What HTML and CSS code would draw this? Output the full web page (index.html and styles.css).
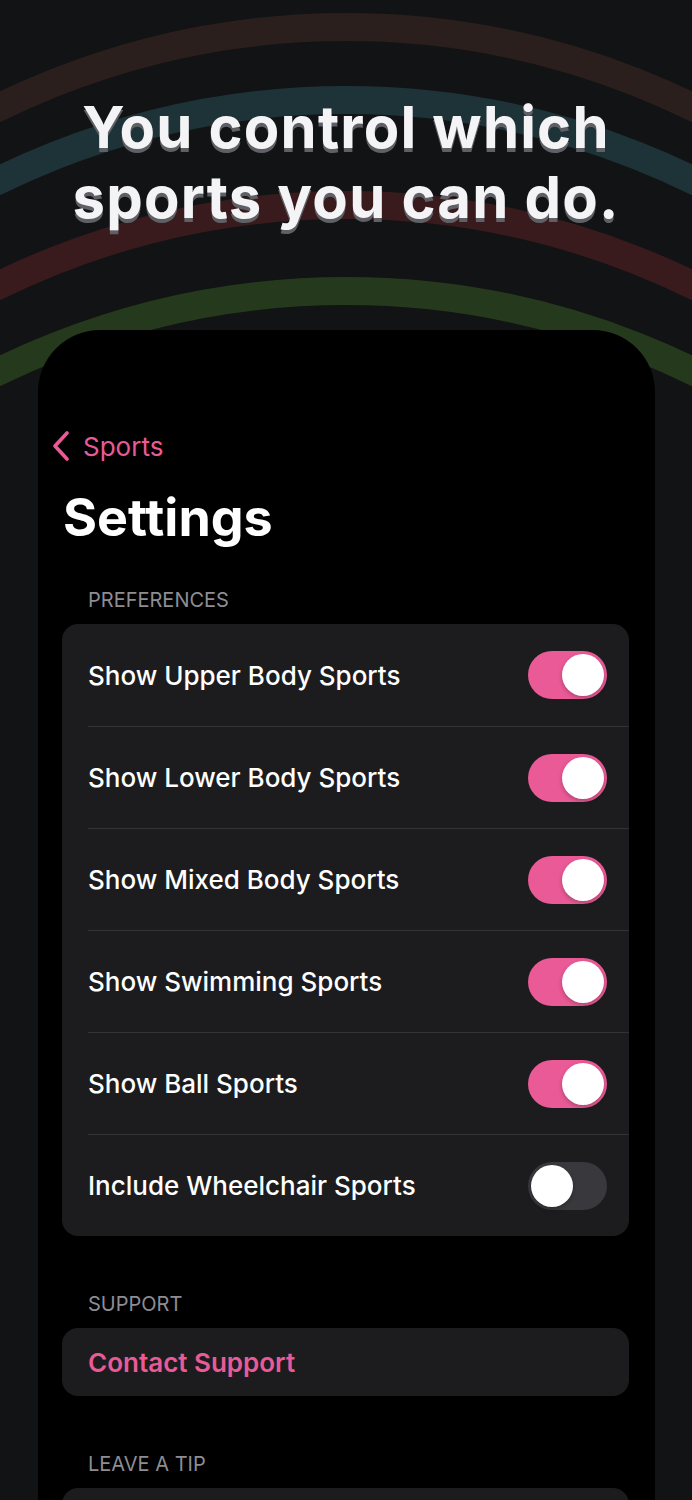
FILE: index.html
```html
<!DOCTYPE html>
<html lang="en">
  <head>
    <meta charset="UTF-8" />
    <meta name="viewport" content="width=device-width, initial-scale=1.0" />
    <title>Settings</title>
    <link rel="stylesheet" href="styles.css">
  </head>
  <body>
    <svg class="backdrop" width="692" height="420" viewBox="0 0 692 420">
      <g fill="none" stroke-width="28">
        <circle cx="346" cy="817" r="790" stroke="#2a1f1c" />
        <circle cx="346" cy="890" r="790" stroke="#1d3338" />
        <circle cx="346" cy="995" r="790" stroke="#3a1b1d" />
        <circle cx="346" cy="1081" r="790" stroke="#253a1d" />
      </g>
    </svg>

    <header class="hero">
      <h1>You control which<br />sports you can do.</h1>
    </header>

    <main class="phone">
      <nav class="back">
        <svg width="18" height="30" viewBox="0 0 18 30">
          <path d="M15 2 L3 15 L15 28" fill="none" stroke="#ea5a96" stroke-width="3.6" stroke-linecap="round" stroke-linejoin="round" />
        </svg>
        <span>Sports</span>
      </nav>

      <h2 class="title">Settings</h2>

      <section class="group">
        <h3 class="group-label">PREFERENCES</h3>
        <ul class="card">
          <li class="row"><span>Show Upper Body Sports</span><span class="toggle on"></span></li>
          <li class="row"><span>Show Lower Body Sports</span><span class="toggle on"></span></li>
          <li class="row"><span>Show Mixed Body Sports</span><span class="toggle on"></span></li>
          <li class="row"><span>Show Swimming Sports</span><span class="toggle on"></span></li>
          <li class="row"><span>Show Ball Sports</span><span class="toggle on"></span></li>
          <li class="row"><span>Include Wheelchair Sports</span><span class="toggle"></span></li>
        </ul>
      </section>

      <section class="group">
        <h3 class="group-label">SUPPORT</h3>
        <ul class="card">
          <li class="row link">Contact Support</li>
        </ul>
      </section>

      <section class="group">
        <h3 class="group-label">LEAVE A TIP</h3>
        <ul class="card">
          <li class="row"></li>
        </ul>
      </section>
    </main>
  </body>
</html>
```

FILE: styles.css
```css
html,
body {
  margin: 0;
  height: 1500px;
  overflow: hidden;
}
body {
  position: relative;
  background-color: #121315;
  font-family: Inter, "Noto Sans", sans-serif;
  color: white;
}
.backdrop {
  position: absolute;
  top: 0;
  left: 0;
}

.hero {
  position: relative;
  padding-top: 92px;
  height: 330px;
  box-sizing: border-box;
  text-align: center;
}
.hero h1 {
  margin: 0;
  font-size: 58px;
  line-height: 70px;
  font-weight: 700;
  letter-spacing: 1.2px;
  color: #f4f4f6;
  text-shadow: 0 4px 0 #5f5f66;
}

.phone {
  position: relative;
  margin: 0 37px 0 38px;
  padding: 100px 26px 0 24px;
  height: 1170px;
  box-sizing: border-box;
  overflow: hidden;
  background-color: black;
  border-radius: 62px 62px 0 0;
}

.back {
  display: flex;
  align-items: center;
  gap: 13px;
  margin-left: -10px;
  height: 32px;
  color: #ea5a96;
  font-size: 26px;
}

.title {
  margin: 25px 0 0 1px;
  font-size: 52px;
  line-height: 62px;
  font-weight: 700;
}

.group {
  margin-top: 39px;
}
.group + .group {
  margin-top: 56px;
}
.group-label {
  margin: 0 0 12px 26px;
  font-size: 20px;
  line-height: 24px;
  font-weight: 400;
  color: #8d8d93;
}
.card {
  list-style: none;
  margin: 0;
  padding: 0 0 0 26px;
  background-color: #1c1c1e;
  border-radius: 16px;
}
.row {
  display: flex;
  justify-content: space-between;
  align-items: center;
  height: 102px;
  padding-right: 22px;
  font-size: 26px;
  font-weight: 500;
  box-sizing: border-box;
}
.row + .row {
  border-top: 1px solid #333336;
}
.row.link {
  height: 68px;
  color: #ea5a96;
  font-weight: 600;
}

.toggle {
  position: relative;
  width: 79px;
  height: 48px;
  border-radius: 24px;
  background-color: #39393d;
}
.toggle::after {
  content: "";
  position: absolute;
  top: 3px;
  left: 3px;
  width: 42px;
  height: 42px;
  border-radius: 50%;
  background-color: white;
  box-shadow: 0 2px 4px rgba(0, 0, 0, 0.25);
}
.toggle.on {
  background-color: #ea5a96;
}
.toggle.on::after {
  left: 34px;
}
```
